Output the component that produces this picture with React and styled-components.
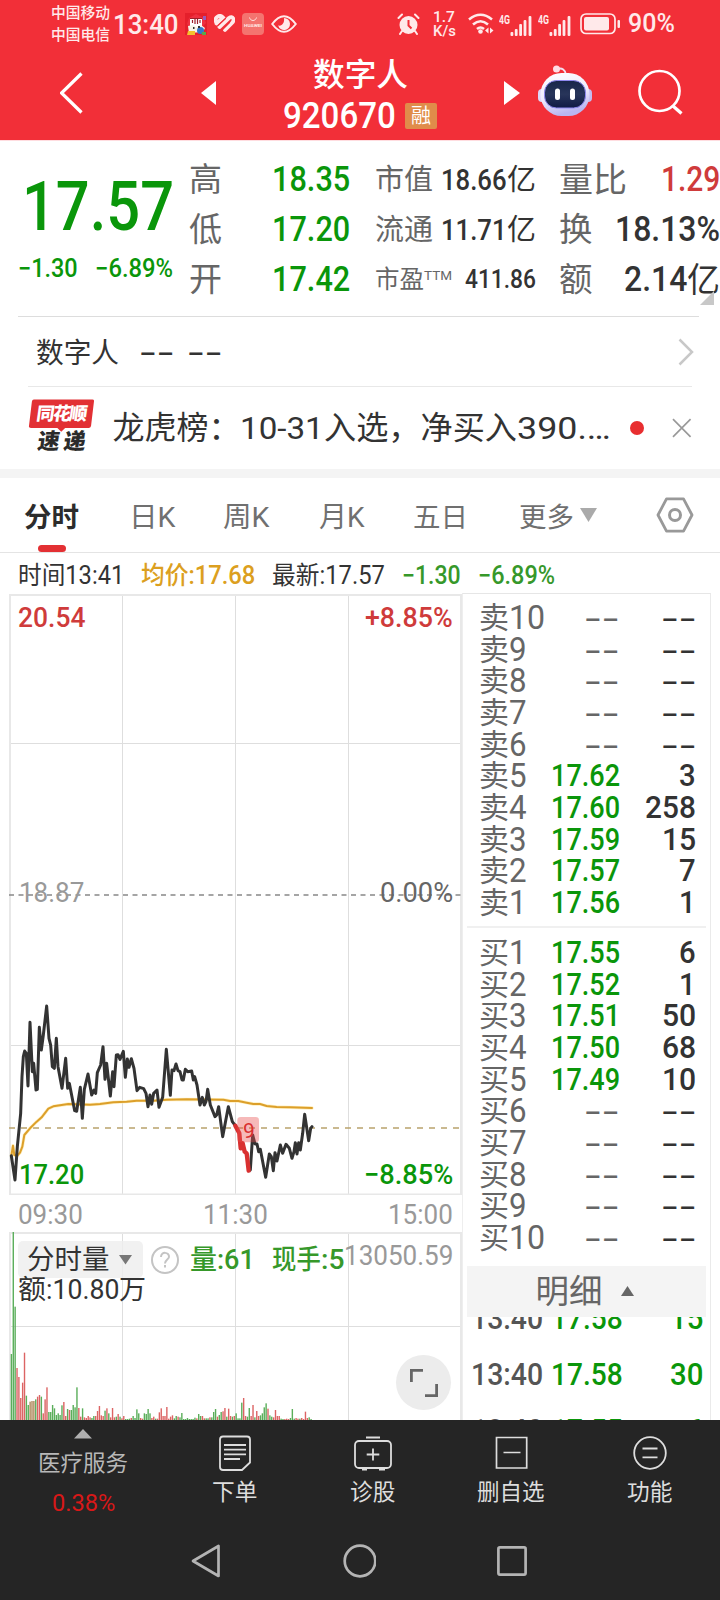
import React from 'react';
import styled, { createGlobalStyle } from 'styled-components';

const GlobalStyle = createGlobalStyle`
* { box-sizing: border-box; }
body {
margin: 0;
background: #fff;
font-family: Roboto, "Noto Sans CJK SC", sans-serif;
color: #333;
}
svg { display: block; }
`;

const GREEN = '#0a960a';
const RED = '#cf3b3b';

const Page = styled.div`
width: 720px;
height: 1600px;
overflow: hidden;
display: flex;
flex-direction: column;
`;

/* text squeezed or stretched to a given width */
const FitBox = styled.span`
display: block;
flex: none;
white-space: nowrap;
color: ${p => p.$color || 'inherit'};
font-size: ${p => p.$size}px;
font-weight: ${p => p.$weight || 400};
font-family: ${p => p.$font || 'inherit'};
`;
const FitInner = styled.span`
display: inline-block;
vertical-align: top;
transform-origin: 0 50%;
`;

const Fit = ({ w, size, color, weight, font, children }) => {
    const ref = React.useRef(null);
    const [scale, setScale] = React.useState(1);
    React.useLayoutEffect(() => {
        setScale(w / ref.current.offsetWidth);
    }, [w, children]);
    return (
        <FitBox $size={size} $color={color} $weight={weight} $font={font} style={{ width: w }}>
            <FitInner ref={ref} style={{ transform: `scaleX(${scale})` }}>{children}</FitInner>
        </FitBox>
    );
};

const Dashes = ({ color }) => (
    <Fit w={36} size={31} color={color} font={'"Liberation Sans", sans-serif'}>--</Fit>
);

/* ---------- top ---------- */
const Top = styled.header`
height: 140px;
flex: none;
background: #f22f38;
color: #fff;
`;
const StatusBar = styled.div`
height: 47px;
display: flex;
justify-content: space-between;
padding: 0 46px 0 51px;
color: #ffe9ea;
`;
const StatusLeft = styled.div`
display: flex;
align-items: center;
gap: 7px;
line-height: 22px;
`;
const Clock = styled.div`
margin: 2px -1px 0 -4px;
`;
const StatusRight = styled.div`
display: grid;
grid-template-columns: 36px 35px 31px 39px 42px 48px 46px;
align-items: center;
line-height: 24px;
`;
const Stack = styled.div`
line-height: ${p => p.$lh}px;
`;
const HeaderRow = styled.div`
display: grid;
height: 93px;
grid-template-columns: 60px 22px 119px 15px 62px 164px 62px 16px 18px 54px 46px 46px;
align-items: center;
`;
const Title = styled.div`
grid-column: 6;
display: flex;
flex-direction: column;
align-items: center;
line-height: 40px;
margin-top: 5px;
`;
const CodeLine = styled.div`
display: flex;
align-items: center;
gap: 9px;
height: 42px;
line-height: 42px;
`;
const Badge = styled.span`
width: 32px;
height: 26px;
line-height: 26px;
border-radius: 2px;
background: #e08c4a;
font-size: 20px;
text-align: center;
`;
const Cell = styled.div`
grid-column: ${p => p.$col};
margin-top: ${p => p.$mt || 0}px;
`;

const Signal = () => (
    <svg width="35" height="24" viewBox="0 0 35 24" fill="#ffe9ea">
        <text x="0" y="12" fontSize="12" fontWeight="700" textLength="11" lengthAdjust="spacingAndGlyphs">4G</text>
        <rect x="11.5" y="20" width="2.8" height="4" rx="1" />
        <rect x="15.8" y="17" width="2.8" height="7" rx="1" />
        <rect x="20.2" y="12" width="2.8" height="12" rx="1" />
        <rect x="24.6" y="8" width="2.8" height="16" rx="1" />
        <rect x="29.6" y="4" width="2.8" height="20" rx="1" />
    </svg>
);

const Status = () => (
    <StatusBar>
        <StatusLeft>
            <Stack $lh={22}>
                <Fit w={59} size={15} weight={500}>中国移动</Fit>
                <Fit w={59} size={15} weight={500}>中国电信</Fit>
            </Stack>
            <Clock><Fit w={66} size={27} weight={500}>13:40</Fit></Clock>
            <svg width="22" height="22" viewBox="0 0 22 22">
                <rect width="22" height="22" fill="#e51f2b" />
                <path d="M2 11 4 5l7-4 8 4 2 5-3 3-14 1z" fill="#ee3040" />
                <path d="M5 6h12v9H5z" fill="#fff" />
                <path d="M5 5.500h12M7.500 7v3M10 6v5M12.500 6v5M15 7v3" stroke="#9c1f2a" strokeWidth="1.200" />
                <path d="M3 13l5-1 3 2 5-2 4 3-2 4-14 1z" fill="#f8f4e8" />
                <path d="M3 18h7v4H2z" fill="#f4c12e" />
                <circle cx="15.500" cy="17.500" r="3.500" fill="#3478c8" />
                <path d="M8 14h1.500v2H8zM13 13h2v2h-2z" fill="#333" />
                <rect x="18" y="3" width="3" height="4" fill="#9a58b8" />
                <rect x="17" y="19" width="4" height="3" fill="#58a848" />
            </svg>
            <svg width="21" height="20" viewBox="0 0 21 20" fill="none" stroke="#ffe9ea" strokeWidth="3.800" strokeLinecap="round">
                <path d="M2 8C0 3 6 0 9 3.500L2.500 9.500" />
                <path d="M5.500 13 15 4C19 1 21 6 18 9L11 16" />
                <path d="M4 11.500 11.500 4.500M8.500 15.500 15.500 8.500" stroke="#f22f38" strokeWidth="1.300" />
            </svg>
            <svg width="22" height="22" viewBox="0 0 22 22">
                <rect width="22" height="22" rx="4" fill="#f4746f" />
                <path d="M7.500 4.500c1 4 6 4 7 0" fill="none" stroke="#ffe0dc" strokeWidth="1" />
                <text x="2" y="14" fontSize="4" fontWeight="700" fill="#ffe4e2" textLength="18" lengthAdjust="spacingAndGlyphs">HUAWEI</text>
            </svg>
            <svg width="26" height="20" viewBox="0 0 26 20" fill="none" stroke="#ffe9ea" strokeWidth="2">
                <path d="M1.200 10Q13-5.500 24.800 10 13 25.500 1.200 10z" />
                <path d="M13 4a6 6 0 1 1-5.800 7.500c4 1 6.500-3 5.800-7.500z" fill="#ffe9ea" stroke="none" />
            </svg>
        </StatusLeft>
        <StatusRight>
            <svg width="23" height="22" viewBox="0 0 23 22">
                <circle cx="11.500" cy="12" r="9" fill="#ffe9ea" />
                <path d="M1.500 5 5 1.500M21.500 5 18 1.500M5 18l-2 3M18 18l2 3" stroke="#ffe9ea" strokeWidth="2" strokeLinecap="round" />
                <path d="M11.500 7v5.500l3 3" fill="none" stroke="#f22f38" strokeWidth="2" />
            </svg>
            <Stack $lh={14}>
                <Fit w={22} size={15.5} weight={500}>1.7</Fit>
                <Fit w={23} size={15.5} weight={500}>K/s</Fit>
            </Stack>
            <svg width="26" height="22" viewBox="0 0 26 22" fill="none" stroke="#ffe9ea" strokeWidth="2.600">
                <path d="M1 6.500Q12.500-3 24 6.500M5 11.500Q12.500 5 20 11.500M9 16q3.500-3 7 0" />
                <circle cx="12.500" cy="18.500" r="2.300" fill="#ffe9ea" stroke="none" />
                <path d="M20.500 14.500v6l-3.500-3zM22 14.500v6l3.500-3z" fill="#ffe9ea" stroke="none" />
            </svg>
            <Signal />
            <Signal />
            <svg width="41" height="22" viewBox="0 0 41 22">
                <rect x="1" y="1" width="34" height="19.500" rx="5" fill="none" stroke="#ffe9ea" strokeWidth="1.700" />
                <rect x="4" y="4" width="25" height="13.500" rx="2" fill="#ffe9ea" />
                <rect x="37.500" y="7" width="2.500" height="8" rx="1" fill="#ffe9ea" />
            </svg>
            <Fit w={47} size={25} weight={500}>90%</Fit>
        </StatusRight>
    </StatusBar>
);

const Header = () => (
    <HeaderRow>
        <Cell $col={2}>
            <svg width="24" height="44" viewBox="0 0 24 44" fill="none" stroke="#fff" strokeWidth="3.300">
                <path d="M21.500 1.500 1.500 21 21.500 40.500" />
            </svg>
        </Cell>
        <Cell $col={4} $mt={-1}>
            <svg width="16" height="24" viewBox="0 0 16 24" fill="#fff"><path d="M15 0v24L0 12z" /></svg>
        </Cell>
        <Title>
            <Fit w={95} size={32} weight={500}>数字人</Fit>
            <CodeLine>
                <Fit w={113} size={36} weight={500}>920670</Fit>
                <Badge>融</Badge>
            </CodeLine>
        </Title>
        <Cell $col={8} $mt={-1}>
            <svg width="16" height="24" viewBox="0 0 16 24" fill="#fff"><path d="M0 0v24l16-12z" /></svg>
        </Cell>
        <Cell $col={10} $mt={-5}>
            <svg width="54" height="52" viewBox="0 0 54 52">
                <defs>
                    <linearGradient id="shell" x1="0" y1="0" x2="0.300" y2="1">
                        <stop offset="0" stopColor="#fff" />
                        <stop offset="0.600" stopColor="#eeeafc" />
                        <stop offset="1" stopColor="#b9b6f0" />
                    </linearGradient>
                    <linearGradient id="face" x1="0" y1="0" x2="0" y2="1">
                        <stop offset="0" stopColor="#18264a" />
                        <stop offset="0.500" stopColor="#28355a" />
                        <stop offset="1" stopColor="#101a44" />
                    </linearGradient>
                </defs>
                <path d="M19 4q8-2 9 6" fill="none" stroke="#f3dfee" strokeWidth="2" />
                <circle cx="18.500" cy="4" r="3.500" fill="#ffdce4" />
                <rect x="0" y="24" width="9" height="13" rx="4" fill="#dcd6f8" />
                <rect x="45" y="24" width="9" height="13" rx="4" fill="#c4bcf0" />
                <rect x="2.500" y="8" width="49" height="43" rx="21" fill="url(#shell)" />
                <rect x="6.500" y="15.500" width="41" height="27.500" rx="12" fill="url(#face)" stroke="#8f88f0" strokeWidth="1" />
                <rect x="17" y="23.500" width="5" height="11.500" rx="2.500" fill="#fff" />
                <rect x="32" y="23.500" width="5" height="11.500" rx="2.500" fill="#fff" />
            </svg>
        </Cell>
        <Cell $col={12} $mt={-3}>
            <svg width="46" height="46" viewBox="0 0 46 46" fill="none" stroke="#fff" strokeWidth="2.700">
                <circle cx="21.500" cy="22" r="20" />
                <path d="M35 37l8.500 7.500" strokeWidth="3.300" />
            </svg>
        </Cell>
    </HeaderRow>
);

/* ---------- quote ---------- */
const Quote = styled.section`
position: relative;
height: 176px;
flex: none;
padding-top: 14px;
display: flex;
border-top: 1px solid #ffdde0;
`;
const PriceCol = styled.div`
width: 189px;
padding: 17px 0 0 18px;
line-height: 70px;
`;
const PriceBig = styled.div`
padding-left: 4px;
`;
const ChangeLine = styled.div`
display: flex;
gap: 17px;
line-height: 54px;
`;
const StatCol = styled.div`
width: ${p => p.$w}px;
margin-right: ${p => p.$mr}px;
flex: none;
`;
const StatRow = styled.div`
height: 50px;
line-height: 50px;
display: flex;
justify-content: space-between;
color: #333;
`;
const StatLabel = styled.div`
display: flex;
color: #666;
font-size: ${p => p.$size}px;
`;
const Sup = styled.span`
font-size: 13.5px;
line-height: 40px;
`;
const Group = styled.div`
display: flex;
`;
const Corner = styled.i`
position: absolute;
right: 6px;
bottom: 11px;
border-left: 14px solid transparent;
border-bottom: 14px solid #c8c8c8;
`;

const QuotePanel = () => (
    <Quote>
        <PriceCol>
            <PriceBig><Fit w={152} size={69} weight={500} color={GREEN}>17.57</Fit></PriceBig>
            <ChangeLine>
                <Fit w={60} size={25} weight={500} color={GREEN}>−1.30</Fit>
                <Fit w={78} size={25} weight={500} color={GREEN}>−6.89%</Fit>
            </ChangeLine>
        </PriceCol>
        <StatCol $w={161} $mr={25}>
            {[['高', '18.35'], ['低', '17.20'], ['开', '17.42']].map(([k, v]) => (
                <StatRow key={k}>
                    <StatLabel $size={33}>{k}</StatLabel>
                    <Fit w={78} size={35} weight={500} color={GREEN}>{v}</Fit>
                </StatRow>
            ))}
        </StatCol>
        <StatCol $w={161} $mr={23}>
            {[['市值', '18.66'], ['流通', '11.71']].map(([k, v]) => (
                <StatRow key={k}>
                    <StatLabel $size={29}>{k}</StatLabel>
                    <Group>
                        <Fit w={66} size={30} weight={500}>{v}</Fit>
                        <Fit w={29} size={29}>亿</Fit>
                    </Group>
                </StatRow>
            ))}
            <StatRow>
                <StatLabel $size={24.5}>市盈<Sup>TTM</Sup></StatLabel>
                <Fit w={71} size={25} weight={500}>411.86</Fit>
            </StatRow>
        </StatCol>
        <StatCol $w={161} $mr={0}>
            <StatRow>
                <StatLabel $size={34}>量比</StatLabel>
                <Fit w={59} size={35} weight={500} color={RED}>1.29</Fit>
            </StatRow>
            <StatRow>
                <StatLabel $size={33.5}>换</StatLabel>
                <Fit w={105} size={35} weight={500}>18.13%</Fit>
            </StatRow>
            <StatRow>
                <StatLabel $size={33.5}>额</StatLabel>
                <Group>
                    <Fit w={63} size={35} weight={500}>2.14</Fit>
                    <Fit w={33} size={34}>亿</Fit>
                </Group>
            </StatRow>
        </StatCol>
        <Corner />
    </Quote>
);

/* ---------- related stock and news ---------- */
const Related = styled.div`
height: 70px;
flex: none;
margin: 0 21px 0 18px;
padding: 0 5px 0 18px;
border-top: 1px solid #ddd;
display: flex;
align-items: center;
line-height: 66px;
gap: 12px;
`;
const Name = styled.div`
padding-top: 4px;
margin-right: 8px;
`;
const RelatedArrow = styled.div`
margin-left: auto;
`;
const News = styled.div`
height: 83px;
flex: none;
margin: 0 28px;
border-top: 1px solid #e8e8e8;
display: flex;
align-items: center;
line-height: 82px;
`;
const Logo = styled.svg`
margin-top: -4px;
`;
const NewsText = styled.div`
display: flex;
margin: 0 19px 0 18px;
width: 499px;
`;
const Dot = styled.i`
width: 14px;
height: 14px;
border-radius: 50%;
background: #e82e30;
margin-right: 28px;
flex: none;
`;
const Band = styled.div`
height: 9px;
flex: none;
background: #f4f4f4;
`;

const RelatedRow = () => (
    <Related>
        <Name><Fit w={83} size={28}>数字人</Fit></Name>
        <Dashes />
        <Dashes />
        <RelatedArrow>
            <svg width="16" height="28" viewBox="0 0 16 28" fill="none" stroke="#c8c8c8" strokeWidth="2.500">
                <path d="M1.500 1.500 14 14 1.500 26.500" />
            </svg>
        </RelatedArrow>
    </Related>
);

const NewsRow = () => (
    <News>
        <Logo width="68" height="60" viewBox="0 0 68 60">
            <path d="M6 3h60q2 0 1.500 2l-3 25q-.500 2-2.500 2H38l-4 4-4-4H3q-2.500 0-2-2L4 5q.300-2 2-2z" fill="#e23034" />
            <g fontWeight="900" fontFamily="Noto Sans CJK SC">
                <text transform="translate(8 24) skewX(-8)" fontSize="18.500" fill="#fff" textLength="52">同花顺</text>
                <text transform="translate(9 54) skewX(-8)" fontSize="22.500" fill="#2b2b2b" textLength="49">速递</text>
            </g>
        </Logo>
        <NewsText>
            <Fit w={128} size={32}>龙虎榜：</Fit>
            <Fit w={84} size={32}>10-31</Fit>
            <Fit w={193} size={32}>入选，净买入</Fit>
            <Fit w={94} size={32}>390.…</Fit>
        </NewsText>
        <Dot />
        <svg width="20" height="20" viewBox="0 0 20 20" stroke="#999" strokeWidth="1.700">
            <path d="M1 1l18 18M19 1 1 19" />
        </svg>
    </News>
);

/* ---------- tabs ---------- */
const Tabs = styled.nav`
height: 75px;
flex: none;
display: grid;
grid-template-columns: 24px 105px 94px 96px 94px 106px 61px 76px 38px;
align-items: center;
border-bottom: 1px solid #e4e4e4;
`;
const Tab = styled.div`
position: relative;
height: 74px;
line-height: 79px;
color: ${p => (p.$active ? '#2c2c2c' : '#707070')};
`;
const Underline = styled.i`
position: absolute;
left: 14px;
bottom: 0;
width: 28px;
height: 7px;
border-radius: 4px;
background: #e33033;
`;
const TabBar = () => (
    <Tabs>
        <span />
        <Tab $active><Fit w={55} size={27.5} weight={700}>分时</Fit><Underline /></Tab>
        <Tab><Fit w={47} size={28}>日K</Fit></Tab>
        <Tab><Fit w={47} size={28}>周K</Fit></Tab>
        <Tab><Fit w={46} size={28}>月K</Fit></Tab>
        <Tab><Fit w={55} size={27.5}>五日</Fit></Tab>
        <Tab><Fit w={55} size={27.5}>更多</Fit></Tab>
        <svg width="18" height="16" viewBox="0 0 18 16" fill="#aaa"><path d="M0 1h17L8.500 15z" /></svg>
        <svg width="38" height="36" viewBox="0 0 38 36" fill="none" stroke="#999" strokeWidth="2.800" strokeLinejoin="round">
            <path d="M10.500 1.800h17L36 18l-8.500 16.200h-17L2 18z" />
            <circle cx="19" cy="18" r="5.500" strokeWidth="3" />
        </svg>
    </Tabs>
);

/* ---------- chart and order book ---------- */
const InfoLine = styled.div`
height: 40px;
flex: none;
display: flex;
gap: 17px;
padding-left: 18px;
line-height: 46px;
`;
const Main = styled.main`
height: 827px;
flex: none;
display: flex;
overflow: hidden;
`;
const ChartCol = styled.div`
width: 462px;
padding-top: 1px;
flex: none;
`;
const ChartArea = styled.div`
position: relative;
height: ${p => p.$h}px;
`;
const ChartLabel = styled.div`
position: absolute;
left: ${p => p.$x}px;
top: ${p => p.$y}px;
line-height: 28px;
`;
const TimeAxis = styled.div`
height: 37px;
padding: 0 9px 0 18px;
display: flex;
justify-content: space-between;
line-height: 40px;
color: #999;
`;

const PRICE_A = '34,527 45,600 52,500 62,400 66,290 70,230 74,213 79,220 84,318 90,127 97,275 101,250 108,330 112,328 118,142 124,210 130,165 140,78 147,175 152,195 157,260 163,265 169,175 174,260 186,325 197,235 203,325 208,310 224,392 230,394 241,322 247,415 253,328 264,282 275,345 282,330 287,340 292,278 302,255 309,200 315,298 320,250 331,348 338,275 342,320 349,225 354,224 360,238 370,214 376,292 382,237 387,262 394,236 402,265 411,332 419,322 431,326 438,340 444,380 450,345 455,373 461,340 471,330 477,382 488,352 499,208 511,346 516,270 522,272 528,252 534,272 540,275 546,300 550,300 556,268 563,275 575,273 580,300 584,290 591,315 600,375 607,352 613,375 618,365 623,328 631,375 645,410 650,405 656,380 668,470 685,380 697,425 706,437';
const PRICE_RED = '706,437 718,460 722,505 728,490 734,515 740,520 746,572';
const PRICE_B = '746,572 751,570 758,465 765,492 771,492 776,515 781,508 797,592 808,522 814,530 820,572 825,518 831,543 841,495 848,520 858,493 868,505 876,535 882,515 886,488 891,522 896,488 901,510 908,460 914,403 926,482 932,445 936,440';
const AVERAGE = '34,527 39,497 43,525 52,527 60,518 67,500 73,465 90,445 110,425 125,412 145,386 160,379 180,376 205,372 270,374 300,372 340,367 380,365 410,362 460,362 500,359 560,358 670,359 690,363 715,363 740,368 760,372 780,372 800,378 830,381 870,382 936,384';

const VOLUME = 'g198 g564 g340 r156 r129 r66 r112 r202 g73 g45 n55 n57 n57 g62 r70 r75 g70 r20 r62 r98 g24 g24 g45 g35 g15 g20 g15 g44 r54 r12 g33 r30 g30 g45 g38 g98 r36 r10 g35 r8 r6 r12 r8 g6 g12 r12 r27 r42 r14 r12 g28 r35 g20 r8 r36 r8 g10 r18 g10 r5 r12 g3 g3 g4 r6 g12 g6 g32 g20 r6 r4 g20 g18 g33 g20 r6 r10 g4 r4 r23 r35 r12 r12 r39 r4 r10 r14 g5 g12 r10 g8 g21 g3 g3 g6 g3 g3 g3 g7 r5 g18 g12 r12 r5 g5 g5 r8 g8 g24 g33 r10 g15 g24 r26 r36 g10 r34 r12 g10 r12 g20 g5 g5 g52 r66 r12 g10 g36 r12 r45 g8 r27 r12 g14 g20 g38 g50 r34 g14 g10 r8 r30 r12 r12 g4 g3 r3 r4 r3 g6 g33 g4 r6 r4 g4 r6 r3 r25 r6 g8 g3'.split(' ');
const VOLUME_COLORS = { g: '#5aae5a', r: '#dc6464', n: '#b08a5c' };

const PriceChart = () => (
    <ChartArea $h={601}>
        <svg width="462" height="601" viewBox="0 0 462 601" fill="none">
            <path d="M122.500 0v601M235.500 0v601M348.500 0v601M9 149.500h453M9 451.500h453" stroke="#dedede" />
            <path d="M10 0v601M461 0v601M9 1h453M9 600.500h453" stroke="#e8e8e8" strokeWidth="2" />
            <path d="M9 301h453" stroke="#888" strokeWidth="1.300" strokeDasharray="5 4.500" />
            <path d="M9 534h453" stroke="#b9a26c" strokeWidth="1.700" strokeDasharray="6 6" />
            <g transform="translate(0 386) scale(.33333)" strokeLinejoin="round" strokeLinecap="round">
                <polyline points={AVERAGE} stroke="#fff0c0" strokeWidth="10" />
                <polyline points={AVERAGE} stroke="#dc9f2a" strokeWidth="6" />
                <polyline points={PRICE_A} stroke="#333" strokeWidth="9" />
                <polyline points={PRICE_B} stroke="#333" strokeWidth="9" />
                <polyline points={PRICE_RED} stroke="#d93030" strokeWidth="13" />
                <rect x="712" y="411" width="65" height="76" rx="10" fill="#e85050" fillOpacity=".4" />
            </g>
            <text x="243" y="544" fontSize="21" fill="#d93030">9</text>
        </svg>
        <ChartLabel $x={18} $y={10}><Fit w={67} size={28} weight={500} color={RED}>20.54</Fit></ChartLabel>
        <ChartLabel $x={365} $y={10}><Fit w={88} size={28} weight={500} color={RED}>+8.85%</Fit></ChartLabel>
        <ChartLabel $x={19} $y={285}><Fit w={65} size={28} color="#999">18.87</Fit></ChartLabel>
        <ChartLabel $x={380} $y={285}><Fit w={73} size={28} color="#666">0.00%</Fit></ChartLabel>
        <ChartLabel $x={19} $y={567}><Fit w={65} size={27.5} weight={500} color={GREEN}>17.20</Fit></ChartLabel>
        <ChartLabel $x={364} $y={567}><Fit w={89} size={27.5} weight={500} color={GREEN}>−8.85%</Fit></ChartLabel>
    </ChartArea>
);

const IndicatorTag = styled.div`
position: absolute;
left: 18px;
top: 9px;
width: 125px;
height: 37px;
padding-left: 9px;
display: flex;
align-items: center;
gap: 9px;
line-height: 42px;
border-radius: 5px;
background: rgba(238, 238, 238, 0.8);
`;
const VolumeLine = styled.div`
position: absolute;
left: 151px;
top: 12px;
display: flex;
align-items: center;
line-height: 32px;
gap: 11px;
`;
const ExpandButton = styled.div`
position: absolute;
left: 396px;
top: 123px;
width: 55px;
height: 55px;
border-radius: 50%;
background: #ececec;
display: grid;
place-items: center;
`;

const VolumeChart = () => (
    <ChartArea $h={188}>
        <svg width="462" height="188" viewBox="0 0 462 188" fill="none">
            <path d="M122.500 0v188M235.500 0v188M348.500 0v188M9 94.500h453" stroke="#dedede" />
            <path d="M10 0v188M461 0v188M9 1h453" stroke="#e8e8e8" strokeWidth="2" />
            {VOLUME.map((v, i) => {
                const h = Number(v.slice(1)) / 3;
                return <rect key={i} x={10.7 + i * 1.873} y={188 - h} width="1.4" height={h} fill={VOLUME_COLORS[v[0]]} />;
            })}
        </svg>
        <IndicatorTag>
            <Fit w={83} size={27.5}>分时量</Fit>
            <svg width="14" height="10" viewBox="0 0 14 10" fill="#777"><path d="M0 0h13L6.500 9.500z" /></svg>
        </IndicatorTag>
        <VolumeLine>
            <svg width="28" height="28" viewBox="0 0 28 28" fill="none" stroke="#c4c4c4" strokeWidth="2">
                <circle cx="14" cy="14" r="13" />
                <path d="M10 11c0-6 8.500-5 8 0-.300 2.500-4 2.800-4 6.500M14 19v2.500" />
            </svg>
            <Group>
                <Fit w={27} size={27} weight={500} color="#36982a">量</Fit>
                <Fit w={38} size={27} weight={500} color="#36982a">:61</Fit>
            </Group>
            <Group>
                <Fit w={55} size={27} weight={500} color="#36982a">&nbsp;现手</Fit>
                <Fit w={23} size={27} weight={500} color="#36982a">:5</Fit>
            </Group>
        </VolumeLine>
        <ChartLabel $x={344} $y={10}><Fit w={109} size={27.5} color="#999">13050.59</Fit></ChartLabel>
        <ChartLabel $x={18} $y={44}>
            <Group>
                <Fit w={28} size={27}>额</Fit>
                <Fit w={73} size={27}>:10.80</Fit>
                <Fit w={27} size={27}>万</Fit>
            </Group>
        </ChartLabel>
        <ExpandButton>
            <svg width="30" height="30" viewBox="0 0 30 30" fill="none" stroke="#666" strokeWidth="2.800">
                <path d="M2.400 14V2.400H14M16 27.600h11.600V16" />
            </svg>
        </ExpandButton>
    </ChartArea>
);

const Book = styled.div`
width: 249px;
padding: 0 4px;
border-top: 1px solid #e6e6e6;
border-right: 1px solid #eaeaea;
border-left: 1px solid #eee;
`;
const BookSide = styled.div`
padding-top: ${p => (p.$buy ? 9 : 8)}px;
height: ${p => (p.$buy ? 340 : 332)}px;
border-top: ${p => (p.$buy ? '2px solid #f0f0f0' : 'none')};
`;
const BookRow = styled.div`
height: 31.67px;
line-height: 32px;
display: grid;
grid-template-columns: 73px 79px 1fr;
padding: 0 9px 0 12px;
`;
const BookCell = styled.div`
display: flex;
justify-content: flex-end;
margin-right: ${p => p.$mr || 0}px;
color: ${p => p.$color || '#333'};
`;
const LevelCell = styled.div`
display: flex;
color: #666;
`;
const DetailBar = styled.div`
height: 51px;
background: #f4f4f4;
display: flex;
align-items: center;
justify-content: center;
gap: 18px;
line-height: 56px;
padding-right: 4px;
color: #666;
`;
const Trades = styled.div`
height: 103px;
overflow: hidden;
`;
const TradeRow = styled.div`
height: 56px;
line-height: 56px;
position: relative;
top: -27px;
display: flex;
padding: 0 3px 0 4px;
gap: 8px;
`;
const TradeCount = styled.div`
margin-left: auto;
`;

const SELL = [
    ['10'], ['9'], ['8'], ['7'], ['6'],
    ['5', '17.62', '3'], ['4', '17.60', '258'], ['3', '17.59', '15'], ['2', '17.57', '7'], ['1', '17.56', '1'],
];
const BUY = [
    ['1', '17.55', '6'], ['2', '17.52', '1'], ['3', '17.51', '50'], ['4', '17.50', '68'], ['5', '17.49', '10'],
    ['6'], ['7'], ['8'], ['9'], ['10'],
];
const TRADES = [['13:40', '17.58', '15'], ['13:40', '17.58', '30'], ['13:40', '17.55', '6']];

const Level = ({ side, row }) => (
    <BookRow>
        <LevelCell>
            <Fit w={30} size={30}>{side}</Fit>
            <Fit w={row[0].length * 18} size={33}>{row[0]}</Fit>
        </LevelCell>
        <BookCell $color="#666" $mr={11}>
            {row[1] ? <Fit w={69} size={31} weight={500} color={GREEN}>{row[1]}</Fit> : <Dashes />}
        </BookCell>
        <BookCell $mr={row[2] ? 1 : 0}>
            {row[2] ? <Fit w={row[2].length * 17} size={31} weight={500}>{row[2]}</Fit> : <Dashes />}
        </BookCell>
    </BookRow>
);

const OrderBook = () => (
    <Book>
        <BookSide>{SELL.map(r => <Level key={r[0]} side="卖" row={r} />)}</BookSide>
        <BookSide $buy>{BUY.map(r => <Level key={r[0]} side="买" row={r} />)}</BookSide>
        <DetailBar>
            <Fit w={67} size={33.5}>明细</Fit>
            <svg width="13" height="12" viewBox="0 0 13 12" fill="#666"><path d="M6.500 0 13 10H0z" /></svg>
        </DetailBar>
        <Trades>
            {TRADES.map((t, i) => (
                <TradeRow key={i}>
                    <Fit w={72} size={32} weight={500} color="#555">{t[0]}</Fit>
                    <Fit w={72} size={32} weight={500} color={GREEN}>{t[1]}</Fit>
                    <TradeCount><Fit w={t[2].length * 16.5} size={32} weight={500} color={GREEN}>{t[2]}</Fit></TradeCount>
                </TradeRow>
            ))}
        </Trades>
    </Book>
);

/* ---------- bottom ---------- */
const Bottom = styled.footer`
height: 180px;
flex: none;
background: #252525;
color: #ddd;
`;
const Actions = styled.div`
height: 106px;
display: grid;
grid-template-columns: 166px 138px 138px 138px 140px;
`;
const Action = styled.div`
display: flex;
flex-direction: column;
align-items: center;
padding-top: 15px;
line-height: 32px;
`;
const ActionIcon = styled.div`
height: 40px;
margin-bottom: 1px;
`;
const Sector = styled.div`
display: flex;
flex-direction: column;
align-items: center;
padding-top: 9px;
line-height: 40px;
color: #b8b8b8;
`;
const SectorText = styled.div`
padding-top: 4px;
`;
const SystemNav = styled.div`
height: 70px;
display: grid;
grid-template-columns: 30px 34px 30px;
column-gap: 121px;
padding-left: 191px;
align-items: center;
`;

const ICONS = {
    order: (
        <svg width="32" height="36" viewBox="0 0 32 36" fill="none" stroke="#ddd" strokeWidth="1.800">
            <path d="M4 1.500h24q3 0 3 3v23l-8 7.500H4q-3 0-3-3V4.500q0-3 3-3zM5 10h22M5 14.700h22M5 19.300h22M5 24h16" />
        </svg>
    ),
    diagnose: (
        <svg width="38" height="36" viewBox="0 0 38 36" fill="none" stroke="#ddd" strokeWidth="1.800">
            <rect x="1" y="6" width="36" height="27" rx="4" />
            <path d="M12 2.500h14M19 13.500v12M12.700 19.500h12.600M8 34.500h5M25 34.500h6" />
        </svg>
    ),
    remove: (
        <svg width="33" height="36" viewBox="0 0 33 36" fill="none" stroke="#ddd" strokeWidth="1.700">
            <path d="M1.500 2.500h30.200v30.500H1.500zM8.500 17.500h17" />
        </svg>
    ),
    more: (
        <svg width="34" height="36" viewBox="0 0 34 36" fill="none" stroke="#ddd" strokeWidth="1.800">
            <circle cx="17" cy="18" r="15.800" />
            <path d="M9.500 13.500h15M9.500 22.300h15" />
        </svg>
    ),
};

const BottomBar = () => (
    <Bottom>
        <Actions>
            <Sector>
                <svg width="18" height="10" viewBox="0 0 18 10" fill="#b0b0b0"><path d="M9 0l9 9.500H0z" /></svg>
                <SectorText><Fit w={90} size={22.5}>医疗服务</Fit></SectorText>
                <Fit w={63} size={24} color="#d81818">0.38%</Fit>
            </Sector>
            {[['order', '下单'], ['diagnose', '诊股'], ['remove', '删自选'], ['more', '功能']].map(([icon, name]) => (
                <Action key={icon}>
                    <ActionIcon>{ICONS[icon]}</ActionIcon>
                    <Fit w={name.length * 22.7} size={22.5}>{name}</Fit>
                </Action>
            ))}
        </Actions>
        <SystemNav>
            <svg width="30" height="36" viewBox="0 0 30 36" fill="none" stroke="#b4b4b4" strokeWidth="2.700" strokeLinejoin="round">
                <path d="M27.500 3v30L2 18z" />
            </svg>
            <svg width="34" height="34" viewBox="0 0 34 34" fill="none" stroke="#b4b4b4" strokeWidth="2.700">
                <circle cx="18" cy="17" r="15.300" />
            </svg>
            <svg width="30" height="30" viewBox="0 0 30 30" fill="none" stroke="#b4b4b4" strokeWidth="2.700">
                <rect x="1.400" y="1.400" width="27.200" height="27.200" rx="1.500" />
            </svg>
        </SystemNav>
    </Bottom>
);

const App = () => (
    <Page>
        <GlobalStyle />
        <Top>
            <Status />
            <Header />
        </Top>
        <QuotePanel />
        <RelatedRow />
        <NewsRow />
        <Band />
        <TabBar />
        <InfoLine>
            <Fit w={106} size={25}>时间13:41</Fit>
            <Fit w={114} size={25} color="#dc9f20" weight={500}>均价:17.68</Fit>
            <Fit w={113} size={25}>最新:17.57</Fit>
            <Fit w={59} size={25} weight={500} color="#36982a">−1.30</Fit>
            <Fit w={77} size={25} weight={500} color="#36982a">−6.89%</Fit>
        </InfoLine>
        <Main>
            <ChartCol>
                <PriceChart />
                <TimeAxis>
                    <Fit w={65} size={28}>09:30</Fit>
                    <Fit w={65} size={28}>11:30</Fit>
                    <Fit w={65} size={28}>15:00</Fit>
                </TimeAxis>
                <VolumeChart />
            </ChartCol>
            <OrderBook />
        </Main>
        <BottomBar />
    </Page>
);

export default App;
